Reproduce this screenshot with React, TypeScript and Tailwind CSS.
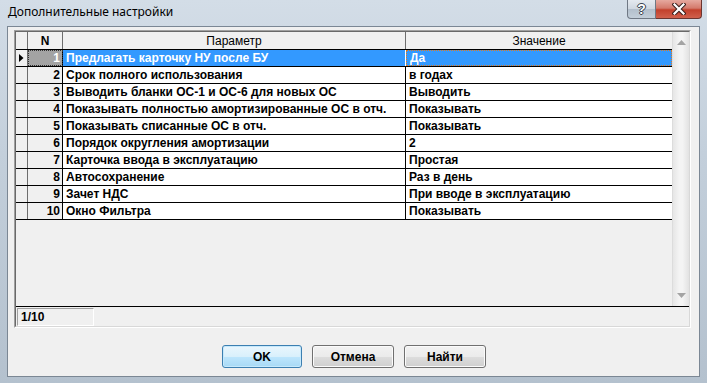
import React from "react";

const rows: [string, string, string][] = [
  ["1", "Предлагать карточку НУ после БУ", "Да"],
  ["2", "Срок полного использования", "в годах"],
  ["3", "Выводить бланки ОС-1 и ОС-6 для новых ОС", "Выводить"],
  ["4", "Показывать полностью амортизированные ОС в отч.", "Показывать"],
  ["5", "Показывать списанные ОС в отч.", "Показывать"],
  ["6", "Порядок округления амортизации", "2"],
  ["7", "Карточка ввода в эксплуатацию", "Простая"],
  ["8", "Автосохранение", "Раз в день"],
  ["9", "Зачет НДС", "При вводе в эксплуатацию"],
  ["10", "Окно Фильтра", "Показывать"],
];

function Row({ r, sel }: { r: [string, string, string]; sel: boolean }) {
  return (
    <div className="flex h-[17px] border-b border-black">
      <div className="w-[12px] shrink-0 border-r border-[#6d6d6d] bg-[#f0f0f0] flex items-center justify-center">
        {sel && (
          <svg width="5" height="8" viewBox="0 0 5 8">
            <path d="M0 0 L4.5 4 L0 8 Z" fill="#000" />
          </svg>
        )}
      </div>
      <div
        className={
          sel
            ? "w-[35px] shrink-0 border-r border-black bg-[#a3a3a3] text-white flex items-center justify-end pr-[2px] outline outline-1 outline-dotted outline-[#303030] -outline-offset-1"
            : "w-[35px] shrink-0 border-r border-black bg-[#f0f0f0] text-black flex items-center justify-end pr-[2px]"
        }
      >
        {r[0]}
      </div>
      <div
        className={
          sel
            ? "w-[343px] shrink-0 border-r border-white bg-[#3399ff] text-white flex items-center pl-[3px] whitespace-nowrap"
            : "w-[343px] shrink-0 border-r border-black bg-white text-black flex items-center pl-[3px] whitespace-nowrap"
        }
      >
        {r[1]}
      </div>
      <div
        className={
          sel
            ? "w-[266px] shrink-0 bg-[#3399ff] text-white flex items-center pl-[3px] whitespace-nowrap border border-dotted border-[#e07a20]"
            : "w-[266px] shrink-0 bg-white text-black flex items-center pl-[3px] whitespace-nowrap"
        }
      >
        {r[2]}
      </div>
    </div>
  );
}

export default function App() {
  return (
    <div
      className="w-[707px] h-[383px] overflow-hidden flex flex-col bg-[linear-gradient(180deg,#d3dde7_0%,#c3cfdb_40%,#b4c1ce_100%)]"
      style={{ fontFamily: '"Liberation Sans", Arial, sans-serif' }}
    >
      {/* Title bar */}
      <div className="h-[26px] shrink-0 flex items-start justify-between pl-[8px] pr-[5px]">
        <div className="pt-[4px] text-[12px] leading-[16px] text-black" style={{ fontFamily: '"Noto Sans", sans-serif' }}>
          Дополнительные настройки
        </div>
        <div className="flex">
          <div className="w-[29px] h-[19px] border border-[#6f7884] border-t-0 rounded-bl-[4px] bg-[linear-gradient(180deg,#e4e9ef_0%,#cfd7e0_50%,#b3bfcc_52%,#c3ced9_100%)] flex items-center justify-center">
            <span
              className="text-[14px] font-bold leading-none text-white"
              style={{ textShadow: "0 0 1px #2b3440, 1px 0 0 #3c4652, -1px 0 0 #3c4652, 0 1px 0 #3c4652, 0 -1px 0 #3c4652" }}
            >
              ?
            </span>
          </div>
          <div className="w-[46px] h-[19px] border border-[#6b3530] border-t-0 border-l-0 rounded-br-[4px] bg-[linear-gradient(180deg,#e6a99f_0%,#d47a6c_45%,#c2402c_55%,#d0604c_100%)] flex items-center justify-center">
            <svg width="14" height="12" viewBox="0 0 14 12">
              <path d="M2.5 1.5 L11.5 10.5 M11.5 1.5 L2.5 10.5" stroke="#3a1f1c" strokeWidth="4.2" strokeLinecap="square" />
              <path d="M2.5 1.5 L11.5 10.5 M11.5 1.5 L2.5 10.5" stroke="#ffffff" strokeWidth="2.2" strokeLinecap="square" />
            </svg>
          </div>
        </div>
      </div>

      {/* Client area */}
      <div className="mx-[7px] h-[351px] shrink-0 border border-[#7b8794] bg-[#f0f0f0] flex flex-col text-[12px] font-bold">
        {/* Grid */}
        <div className="ml-[6px] mt-[3px] w-[677px] h-[298px] border border-t-[#a0a0a0] border-l-[#a0a0a0] border-b-white border-r-white">
          <div className="w-full h-full border border-t-[#696969] border-l-[#696969] border-b-[#d8d8d8] border-r-[#d8d8d8] flex flex-col">
            <div className="flex h-[274px]">
              {/* table */}
              <div className="w-[656px] flex flex-col">
                {/* header */}
                <div className="flex h-[18px] border-b border-black bg-[#f0f0f0]">
                  <div className="w-[12px] shrink-0 border-r border-[#6d6d6d]" />
                  <div className="w-[35px] shrink-0 border-r border-[#6d6d6d] flex items-center justify-center">N</div>
                  <div className="w-[343px] shrink-0 border-r border-[#6d6d6d] flex items-center justify-center font-normal">
                    Параметр
                  </div>
                  <div className="w-[266px] shrink-0 flex items-center justify-center font-normal">Значение</div>
                </div>
                {rows.map((r, i) => (
                  <Row key={r[0]} r={r} sel={i === 0} />
                ))}
              </div>
              {/* scrollbar */}
              <div className="w-[17px] bg-[linear-gradient(90deg,#e6e6e6,#f4f4f4_40%,#f4f4f4_60%,#e2e2e2)] border-l border-[#dcdcdc] flex flex-col items-center justify-between py-[8px]">
                <svg width="9" height="5" viewBox="0 0 9 5">
                  <path d="M0 5 L4.5 0 L9 5 Z" fill="#a4a4a4" />
                </svg>
                <svg width="9" height="5" viewBox="0 0 9 5">
                  <path d="M0 0 L4.5 5 L9 0 Z" fill="#a4a4a4" />
                </svg>
              </div>
            </div>
            {/* status */}
            <div className="flex-1 border-t border-black pt-[1px] pl-[1px]">
              <div className="w-[77px] h-[18px] border border-t-[#a0a0a0] border-l-[#a0a0a0] border-b-white border-r-white flex items-center pl-[3px]">
                1/10
              </div>
            </div>
          </div>
        </div>

        {/* Buttons */}
        <div className="mt-[17px] flex justify-center gap-[10px] pl-[1px]">
          <div className="w-[80px] h-[23px] rounded-[3px] border border-[#3c7fb1] bg-[linear-gradient(180deg,#eaf6fd_0%,#d9f0fc_50%,#bee6fd_51%,#a7d9f5_100%)] flex items-center justify-center shadow-[inset_0_0_0_1px_#c6e9fc]">
            OK
          </div>
          <div className="w-[82px] h-[23px] rounded-[3px] border border-[#707070] bg-[linear-gradient(180deg,#f2f2f2_0%,#ebebeb_50%,#dddddd_51%,#cfcfcf_100%)] flex items-center justify-center shadow-[inset_0_0_0_1px_#fbfbfb]">
            Отмена
          </div>
          <div className="w-[82px] h-[23px] rounded-[3px] border border-[#707070] bg-[linear-gradient(180deg,#f2f2f2_0%,#ebebeb_50%,#dddddd_51%,#cfcfcf_100%)] flex items-center justify-center shadow-[inset_0_0_0_1px_#fbfbfb]">
            Найти
          </div>
        </div>
      </div>
    </div>
  );
}
